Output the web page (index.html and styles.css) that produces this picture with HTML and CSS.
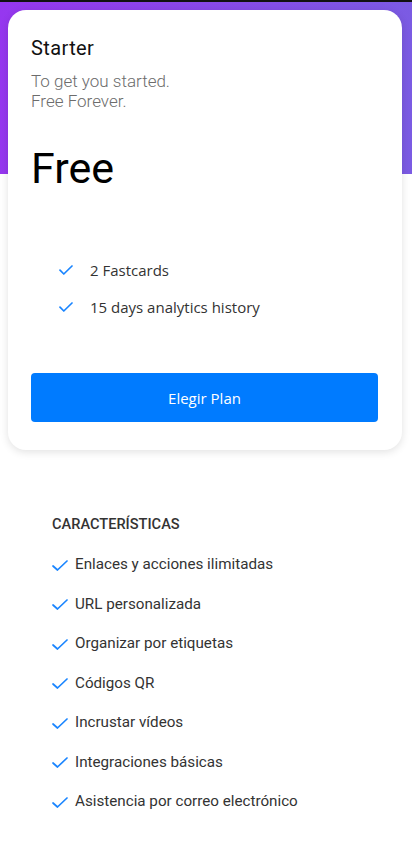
FILE: index.html
```html
<!DOCTYPE html>
<html lang="es">
<head>
<meta charset="utf-8">
<meta name="viewport" content="width=device-width, initial-scale=1">
<link rel="stylesheet" href="styles.css">
</head>
<body>
<div class="hero">
  <div class="card">
    <h2 class="plan-name">Starter</h2>
    <p class="plan-desc">To get you started.<br>Free Forever.</p>
    <div class="price">Free</div>
    <ul class="plan-features">
      <li><svg class="chk" viewBox="0 0 14 10"><path d="M1 5.2 L4.8 9 L13 1"/></svg><span>2 Fastcards</span></li>
      <li><svg class="chk" viewBox="0 0 14 10"><path d="M1 5.2 L4.8 9 L13 1"/></svg><span>15 days analytics history</span></li>
    </ul>
    <button class="btn">Elegir Plan</button>
  </div>
</div>
<section class="features">
  <h3 class="features-title">CARACTERÍSTICAS</h3>
  <ul class="features-list">
    <li><svg class="chk2" viewBox="0 0 16 11"><path d="M1 6 L5.5 10 L15 1"/></svg>Enlaces y acciones ilimitadas</li>
    <li><svg class="chk2" viewBox="0 0 16 11"><path d="M1 6 L5.5 10 L15 1"/></svg>URL personalizada</li>
    <li><svg class="chk2" viewBox="0 0 16 11"><path d="M1 6 L5.5 10 L15 1"/></svg>Organizar por etiquetas</li>
    <li><svg class="chk2" viewBox="0 0 16 11"><path d="M1 6 L5.5 10 L15 1"/></svg>Códigos QR</li>
    <li><svg class="chk2" viewBox="0 0 16 11"><path d="M1 6 L5.5 10 L15 1"/></svg>Incrustar vídeos</li>
    <li><svg class="chk2" viewBox="0 0 16 11"><path d="M1 6 L5.5 10 L15 1"/></svg>Integraciones básicas</li>
    <li><svg class="chk2" viewBox="0 0 16 11"><path d="M1 6 L5.5 10 L15 1"/></svg>Asistencia por correo electrónico</li>
  </ul>
</section>
</body>
</html>
```
FILE: styles.css
```css
* { box-sizing: border-box; }
html, body { margin: 0; padding: 0; background: #fff; }
body { font-family: Roboto, "Noto Sans", sans-serif; color: #333; }

.hero {
  border-top: 2px solid #111;
  background: linear-gradient(to right, #9637ef, #7b5be3) 0 0 / 100% 172px no-repeat;
  padding: 8px 10px 0 8px;
}
.card {
  background: #fff;
  border-radius: 18px;
  box-shadow: 0 2px 8px rgba(0,0,0,0.12);
  padding: 24px 24px 28px 23px;
}
.plan-name {
  margin: 0;
  font-size: 20px;
  line-height: 28px;
  font-weight: 400;
  color: #111;
  letter-spacing: 0.4px;
}
.plan-desc {
  margin: 9px 0 0;
  font-size: 17px;
  line-height: 20px;
  font-weight: 300;
  color: #6c6c6c;
}
.price {
  margin-top: 30px;
  font-size: 43px;
  line-height: 55px;
  font-weight: 400;
  color: #000;
}
.plan-features {
  list-style: none;
  margin: 63px 0 0;
  padding: 0 0 0 28px;
  display: flex;
  flex-direction: column;
  gap: 15px;
  font-family: "Open Sans", "Noto Sans", sans-serif;
  font-size: 15px;
  line-height: 22px;
  color: #333;
}
.plan-features li { display: flex; align-items: center; gap: 17px; }
.chk { width: 14px; height: 10px; flex: none; }
.chk path, .chk2 path { fill: none; stroke: #1a85ff; stroke-width: 1.7; stroke-linecap: round; stroke-linejoin: round; }
.btn {
  display: block;
  width: 100%;
  margin-top: 55px;
  height: 49px;
  border: 0;
  border-radius: 4px;
  background: #007bff;
  color: #fff;
  font-family: "Open Sans", "Noto Sans", sans-serif;
  font-size: 15px;
}

.features { padding: 64px 20px 30px 52px; }
.features-title {
  margin: 0;
  font-size: 14.6px;
  line-height: 20px;
  font-weight: 500;
  color: #333;
}
.features-list {
  list-style: none;
  margin: 19px 0 0;
  padding: 0;
  display: flex;
  flex-direction: column;
  gap: 17.5px;
  font-size: 15.2px;
  line-height: 22px;
  color: #333;
}
.features-list li { display: flex; align-items: center; gap: 7px; }
.chk2 { width: 16px; height: 11px; flex: none; margin-top: 2px; }
```
